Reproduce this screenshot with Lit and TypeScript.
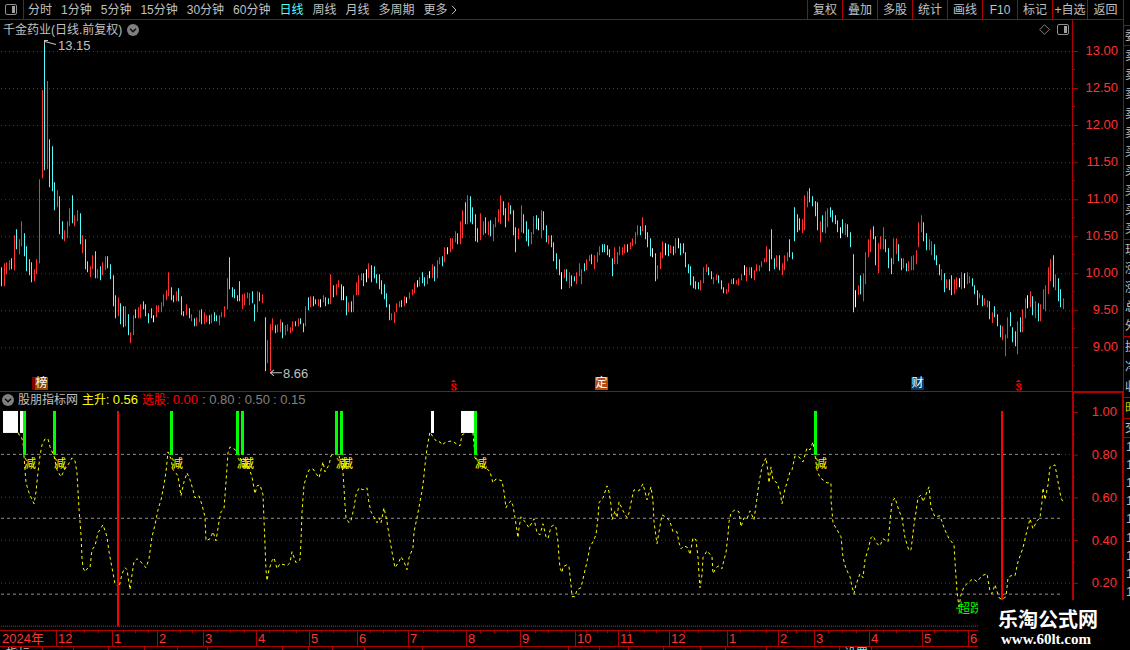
import { LitElement, html, svg, css } from "lit";
import { customElement } from "lit/decorators.js";
import { classMap } from "lit/directives/class-map.js";

const PLOT_W = 1072;
const PRICE_H = 371;
const PRICE_Y0 = 20;
const IND_H = 238;
const IND_Y0 = 392;

// Price bars: x, high, low, kind (r = rise, c = fall, w = unchanged)
const BARS = `
1 267 286 c,4 263 286 r,6 262 274 r,9 260 270 r,11 258 269 c,14 235 270 r,16 229 249 c,19 239 254 r,21 221 246 r,24 233 256 c,
26 246 271 c,29 259 275 c,31 262 282 c,34 269 281 r,36 259 274 r,39 179 263 r,42 90 178 r,44 40 170 c,47 81 169 r,49 139 187 c,
52 146 191 c,54 182 210 c,57 190 207 r,59 196 234 c,62 221 239 c,64 230 241 r,67 221 238 r,69 208 226 r,72 195 223 c,74 215 226 r,
77 210 221 r,80 213 244 c,82 235 253 r,85 239 269 c,87 261 272 c,90 266 277 r,92 255 269 r,95 251 278 c,97 269 278 r,100 266 280 c,
102 262 275 r,105 256 270 r,107 256 268 c,110 264 279 c,113 275 306 c,115 295 318 c,118 297 316 r,120 303 324 c,123 306 327 c,
125 306 326 r,128 314 335 c,130 332 343 r,133 315 335 r,135 309 318 c,138 307 318 r,140 304 318 r,143 301 309 c,145 304 316 c,
148 313 323 c,151 308 318 c,153 315 322 w,156 305 317 r,158 305 312 r,161 302 312 r,163 294 306 r,166 290 300 r,168 272 296 r,
171 287 300 c,173 295 302 c,176 291 301 r,178 288 301 c,181 296 315 c,183 311 316 c,186 304 315 r,189 308 318 c,191 314 321 r,
194 318 326 c,196 317 326 r,199 310 322 r,201 309 324 c,204 312 324 r,206 315 322 r,209 315 324 c,211 314 323 r,214 312 321 c,
216 315 321 c,219 315 325 r,221 312 317 r,224 306 317 r,227 278 309 r,229 257 289 c,232 287 297 c,234 289 298 c,237 295 301 c,
239 281 301 c,242 294 309 r,244 293 305 r,247 292 298 r,249 293 305 r,252 291 303 c,254 304 321 c,257 291 312 r,259 292 301 c,
262 294 303 r,265 317 371 c,267 340 363 r,270 324 371 r,272 318 330 r,275 325 333 c,277 324 332 r,280 319 332 r,282 322 338 c,
285 325 335 r,287 324 331 r,290 327 333 r,292 321 331 r,295 321 326 c,298 318 326 r,300 318 324 c,303 323 332 c,305 306 326 r,
308 297 310 c,310 296 307 r,313 296 306 c,315 299 304 c,318 299 306 r,320 299 307 w,323 295 302 r,325 297 306 c,328 298 304 c,
330 274 304 r,333 285 297 c,336 284 295 r,338 280 287 r,341 284 300 c,343 286 300 w,346 296 315 c,348 302 312 r,351 301 312 c,
353 295 312 r,356 282 295 r,358 275 295 r,361 273 280 r,363 273 286 c,366 269 282 w,368 263 278 r,371 265 282 c,374 266 278 c,
376 274 283 c,379 274 289 c,381 280 294 c,384 284 299 c,386 293 307 c,389 304 320 c,391 313 320 r,394 312 323 r,396 303 312 r,
399 301 307 r,401 300 307 c,404 296 306 r,406 297 303 w,409 292 299 r,412 289 295 r,414 283 293 r,417 280 287 w,419 277 286 r,
422 272 283 c,424 277 286 c,427 275 284 r,429 271 278 w,432 264 278 r,434 266 281 c,437 260 278 r,439 257 264 r,442 256 266 c,
444 247 262 r,447 247 254 w,450 238 252 r,452 238 249 r,455 231 242 r,457 233 244 c,460 221 244 r,462 210 238 r,465 202 224 c,
467 195 224 r,470 196 222 c,472 207 224 c,475 214 241 c,477 228 242 c,480 213 240 r,483 221 235 r,485 217 233 c,488 221 235 r,
490 220 236 c,493 224 241 r,495 217 227 r,498 209 222 r,500 195 224 r,503 201 215 c,505 208 227 c,508 202 221 r,510 205 214 c,
513 210 235 c,515 227 252 c,518 228 239 r,521 205 232 r,523 214 233 c,526 221 241 c,528 229 246 c,531 232 244 r,533 216 234 r,
536 215 229 c,538 218 230 w,541 210 238 r,543 211 230 c,546 225 242 c,548 235 244 r,551 235 247 c,553 242 261 c,556 253 269 c,
559 259 275 c,561 272 289 w,564 269 278 r,566 269 281 c,569 272 288 r,571 275 286 c,574 276 281 c,576 272 284 r,579 263 276 r,
581 269 284 r,584 263 271 c,586 259 270 r,589 255 261 r,591 254 264 c,594 255 269 r,597 252 262 r,599 246 255 r,602 244 252 c,
604 244 252 c,607 245 255 c,609 249 257 c,612 258 276 c,614 247 264 r,617 252 264 r,619 246 255 r,622 247 255 r,624 244 253 r,
627 244 252 c,630 242 249 r,632 238 246 r,635 232 244 r,637 225 235 r,640 226 235 c,642 217 231 r,645 225 239 c,647 232 247 c,
650 238 256 c,652 248 257 w,655 253 281 c,657 265 279 r,660 252 269 r,662 241 258 r,665 243 255 w,668 244 256 c,670 245 253 r,
673 246 255 c,675 238 253 r,678 238 248 w,680 243 255 c,683 243 253 c,685 252 267 c,688 264 273 c,690 266 285 c,693 276 288 c,
695 281 289 c,698 282 289 c,700 280 290 r,703 267 283 r,706 264 272 r,708 267 275 c,711 271 279 c,713 277 284 r,716 274 280 r,
718 275 283 c,721 280 289 c,723 287 293 c,726 289 294 r,728 283 292 r,731 279 284 r,733 278 284 c,736 280 284 r,738 278 285 r,
741 274 280 r,744 265 275 w,746 267 281 r,749 267 275 r,751 267 278 c,754 270 280 r,756 264 271 r,759 265 271 r,761 261 267 r,
764 258 262 r,766 246 262 r,769 249 271 c,771 229 259 c,774 258 269 c,776 255 267 r,779 255 270 c,782 263 275 r,784 255 270 r,
787 252 261 r,789 239 257 c,792 252 259 c,794 207 241 c,797 214 232 c,799 218 230 c,802 219 233 r,804 195 230 r,807 191 207 r,
809 188 202 c,812 196 206 c,815 201 216 c,817 202 230 c,820 221 242 r,822 215 232 c,825 211 233 r,827 208 227 r,830 207 217 c,
832 210 222 c,835 215 224 c,837 220 232 c,840 227 238 w,842 219 233 c,845 223 235 r,847 224 237 c,850 232 247 c,853 254 312 c,
855 290 307 w,858 285 295 r,860 275 294 c,863 273 301 r,865 252 284 r,868 239 257 r,870 229 252 r,873 226 239 c,875 236 265 c,
878 243 273 r,880 236 249 r,883 227 249 r,885 239 252 c,888 248 268 c,891 258 274 c,893 238 264 r,896 238 254 r,898 244 261 c,
901 258 270 c,903 258 268 r,906 263 271 c,908 261 271 r,911 256 270 r,913 255 270 r,916 250 264 r,918 222 247 r,921 215 232 r,
923 222 241 c,926 233 250 c,929 239 250 r,931 241 255 r,934 244 260 c,936 255 265 c,939 264 275 c,941 269 280 r,944 273 292 c,
946 279 288 r,949 279 290 c,951 275 295 c,954 279 294 r,956 277 289 r,959 278 287 w,961 272 289 r,964 273 288 w,967 272 284 r,
969 276 283 r,972 278 286 c,974 285 294 c,977 290 305 c,979 293 298 r,982 295 306 c,984 298 305 r,987 300 307 r,989 301 319 c,
992 312 323 r,994 306 317 c,997 314 326 c,1000 325 337 c,1002 326 340 r,1005 334 356 r,1007 317 338 r,1010 312 326 c,
1012 327 342 c,1015 331 346 c,1017 321 354 r,1020 317 332 c,1022 309 332 r,1025 298 318 r,1027 295 308 w,1030 291 307 r,
1032 296 315 c,1035 301 318 r,1038 303 321 c,1040 304 321 r,1043 289 309 r,1045 285 311 r,1048 267 294 r,1050 259 281 r,
1053 255 287 c,1055 274 290 r,1058 278 301 c,1060 289 307 c,1063 298 309 r`
  .split(",")
  .map((s) => s.trim().split(" "));

const barPath = (kind: string) =>
  BARS.filter((b) => b[3] === kind)
    .map((b) => `M${b[0]}.5 ${b[1]}V${b[2]}`)
    .join("");

// Indicator curve
const CURVE = `17,427 19,435 21,436 23,442 25,470 26,483 29,493 34,504 36,492 38,472 40,456 42,445 45,439 48,439 50,447 54,456
57,470 61,477 65,469 68,465 72,458 75,461 77,473 79,509 81,535 82,558 83,568 85,572 88,568 90,568 92,550 95,546 98,533 103,525
107,537 109,552 112,568 115,584 119,588 122,574 125,568 127,570 130,590 132,575 134,562 137,559 140,561 143,565 146,568 149,559
152,537 155,525 158,510 161,500 164,485 166,472 168,452 171,459 173,470 175,472 178,476 181,496 184,482 187,473 190,480 193,490
195,498 199,496 202,505 205,517 206,541 210,539 213,532 216,541 219,522 221,512 224,509 226,482 228,453 230,447 234,449 238,452
241,460 245,466 249,468 252,477 255,494 257,486 260,485 263,495 264,520 265,545 266,570 267,581 269,570 272,561 274,558 277,569
280,564 284,565 287,566 290,563 292,552 296,563 300,560 301,542 302,512 304,485 307,475 309,470 313,469 315,472 319,478 323,462
325,472 329,465 331,456 333,454 338,453 341,462 343,472 344,488 345,505 346,518 349,523 351,521 354,508 356,495 359,488 363,490
367,488 369,503 371,512 377,523 379,518 381,523 384,508 387,522 389,535 392,552 395,568 399,562 401,557 404,562 407,570 409,558
413,548 414,532 417,518 420,502 423,485 425,465 427,448 430,432 433,437 437,442 440,442 442,445 446,442 452,441 455,443 460,446
462,435 467,432 473,433 474,445 475,458 480,465 487,469 490,472 493,483 496,479 502,481 504,492 506,508 508,504 511,501 513,506
515,518 518,538 519,528 521,517 525,522 529,528 534,519 537,533 540,535 543,524 546,537 548,539 551,527 554,525 556,528 558,542
559,558 560,568 562,573 563,567 567,565 569,567 571,585 572,597 575,597 577,590 581,588 584,575 587,562 590,547 593,542 596,535
598,518 599,503 601,500 603,498 607,486 609,492 611,505 612,520 615,511 617,518 619,502 623,511 627,518 629,513 632,498 634,490
639,491 643,484 647,500 651,487 653,502 654,522 656,537 657,544 659,532 662,515 667,518 670,522 673,532 677,532 679,543 681,549
684,546 688,548 690,555 693,538 696,540 698,558 699,575 700,588 702,575 703,558 707,551 712,557 713,574 716,568 719,566 722,569
724,560 726,553 728,535 729,522 731,513 735,510 739,512 741,527 744,518 747,519 750,511 754,520 757,498 759,483 762,467 766,458
768,472 769,483 771,467 773,480 777,483 780,492 782,504 785,489 787,483 790,472 792,470 795,456 799,457 803,462 805,455 807,448
810,450 813,442 815,455 817,470 820,478 823,480 827,483 831,483 831,500 833,523 837,530 841,537 843,558 846,569 850,577 852,587
854,594 856,585 860,574 863,578 865,560 868,550 871,538 873,536 877,544 880,546 883,539 888,542 890,522 892,502 895,498 899,511
902,518 905,538 909,551 911,550 914,525 916,512 918,498 921,495 923,502 929,487 931,508 935,517 940,516 944,528 949,539 954,545
955,562 957,592 959,607 961,595 964,587 967,584 973,579 977,582 982,576 987,574 990,592 992,594 995,585 999,598 1002,600
1006,597 1008,578 1011,576 1015,576 1018,562 1023,548 1026,535 1030,519 1033,529 1037,521 1040,518 1042,502 1043,488 1045,500
1048,485 1050,467 1055,465 1058,482 1061,498 1063,502`;

const PRICE_TICKS = ["13.00", "12.50", "12.00", "11.50", "11.00", "10.50", "10.00", "9.50", "9.00"].map(
  (label, i) => ({ label, y: 51 + i * 37 })
);
const IND_TICKS = ["1.00", "0.80", "0.60", "0.40", "0.20"].map((label, i) => ({ label, y: 411 + i * 43 }));

const GREEN = [23, 53, 170, 236, 241, 335, 340, 474, 814];
const WHITE = [
  [3, 15],
  [20, 3],
  [431, 3],
  [461, 13],
];
const REDUCE = [24, 54, 171, 237, 242, 336, 341, 475, 815];
const DIVIDEND = [451, 1016];

const MONTHS: [number, string][] = [
  [0, "2024年"], [56, "12"], [112, "1"], [157, "2"], [203, "3"], [256, "4"], [309, "5"], [357, "6"], [408, "7"],
  [466, "8"], [520, "9"], [575, "10"], [618, "11"], [669, "12"], [727, "1"], [778, "2"], [814, "3"], [869, "4"],
  [922, "5"], [968, "6"],
];
const WEEKS = [
  70, 84, 98, 123, 135, 148, 180, 192, 217, 230, 244, 269, 283, 296, 321, 333, 345, 370, 383, 395, 423, 437, 453, 480,
  494, 507, 535, 548, 561, 586, 597, 607, 629, 644, 656, 684, 698, 713, 740, 753, 766, 787, 796, 805, 828, 842, 856,
  883, 896, 909, 934, 945, 957,
];
const FOOT = [42, 73, 108, 144, 177, 207, 282, 308, 332, 364, 422, 568, 599, 628, 663, 700, 725, 766, 839, 871];

const PERIODS = ["分时", "1分钟", "5分钟", "15分钟", "30分钟", "60分钟", "日线", "周线", "月线", "多周期"];
const TOOLS = ["复权", "叠加", "多股", "统计", "画线", "F10", "标记", "+自选", "返回"];

const pctX = (x: number) => `${(x / PLOT_W) * 100}%`;
const priceY = (y: number) => `${((y - PRICE_Y0) / PRICE_H) * 100}%`;
const indY = (y: number) => `${((y - IND_Y0) / IND_H) * 100}%`;

const chevron = html`<svg class="chev" viewBox="0 0 12 12" width="12" height="12" aria-hidden="true">
  <circle cx="6" cy="6" r="6" fill="#808080" />
  <path d="M3 4.7 6 7.7 9 4.7" fill="none" stroke="#101010" stroke-width="1.6" />
</svg>`;

const panelIcon = html`<svg viewBox="0 0 12 11" width="12" height="11" aria-hidden="true">
  <rect x=".5" y=".5" width="11" height="10" rx="1.5" fill="none" stroke="#909090" />
  <rect x="7" y="2" width="3" height="7" fill="#a0a0a0" />
</svg>`;

@customElement("app-root")
export class AppRoot extends LitElement {
  static styles = css`
    :host {
      display: block;
      height: 100vh;
      --line: #b00000;
      --cjk: "Liberation Sans", "Noto Sans CJK SC", sans-serif;
      background: #000;
      color: #c0c0c0;
      font: 12px/14px var(--cjk);
    }
    * { box-sizing: border-box; }
    .app {
      position: relative;
      display: grid;
      grid-template-columns: minmax(0, 1fr) 7px;
      height: 100%;
      overflow: hidden;
    }
    .left { display: flex; flex-direction: column; min-width: 0; min-height: 0; }
    button {
      appearance: none;
      margin: 0;
      padding: 0;
      border: 0;
      background: none;
      color: inherit;
      font: inherit;
      white-space: nowrap;
      display: flex;
      align-items: center;
      justify-content: center;
    }
    .toolbar {
      flex: none;
      display: flex;
      height: 20px;
      border-bottom: 1px solid var(--line);
    }
    .toggle { width: 24px; padding-right: 1px; border-right: 1px solid var(--line); }
    .periods { display: flex; flex: 1; gap: 9px; padding-left: 4px; overflow: hidden; }
    .periods .on { color: #54fcfc; }
    .more { gap: 3px; }
    .tools { display: flex; }
    .tools button { width: 35px; border-left: 1px solid var(--line); }
    .tools button:last-child { width: 36px; }
    .row {
      display: grid;
      grid-template-columns: minmax(0, 1fr) 51px;
      min-height: 0;
    }
    .price { flex: 372 1 0; border-bottom: 1px solid var(--line); }
    .ind { flex: 238 1 0; }
    .plot { position: relative; overflow: hidden; min-height: 0; }
    .canvas { position: absolute; inset: 0; width: 100%; height: 100%; display: block; }
    .head {
      position: absolute;
      top: 0;
      left: 0;
      right: 0;
      display: flex;
      align-items: center;
      gap: 5px;
      height: 19px;
      padding: 0 3px;
      white-space: nowrap;
    }
    .head .icons { display: flex; align-items: center; gap: 7px; margin-left: auto; }
    .chev { flex: none; }
    .ind .head { height: 16px; padding: 0 2px; gap: 4px; }
    .num { font-size: 13px; }
    .levels { display: flex; gap: 3px; color: #808080; }
    .yellow { color: #ff0; }
    .red { color: #f00; }
    .mark { position: absolute; white-space: nowrap; }
    .callout { font-size: 13px; }
    .reduce { color: #ff0; }
    .over { color: #0f0; }
    .badge {
      height: 13px;
      width: 13px;
      color: #fff;
      line-height: 13px;
      text-align: center;
    }
    .rank { width: 16px; padding-left: 3px; background: linear-gradient(90deg, #800000 3px, #8a4600 3px); }
    .fixed { background: #b84a10; }
    .fin { background: #003c70; }
    .axis { position: relative; border-left: 1px solid var(--line); }
    .ind .axis {
      margin-top: -1px;
      border: 2px solid var(--line);
      border-bottom: 0;
      border-right-width: 1px;
    }
    .tick {
      position: absolute;
      left: 0;
      right: 5px;
      height: 14px;
      margin-top: -7px;
      color: #ff3232;
      font-size: 13px;
      text-align: right;
    }
    .time { flex: none; position: relative; height: 17px; border: 1px solid var(--line); border-width: 1px 0; overflow: hidden; }
    .wide { position: relative; width: calc(100% - 51px); height: 100%; }
    .month {
      position: absolute;
      top: 0;
      height: 15px;
      padding-left: 1px;
      border-left: 1px solid var(--line);
      color: #ff3232;
      font-size: 13px;
      line-height: 15px;
      white-space: nowrap;
    }
    .month:first-child { border-left-color: transparent; }
    .week { position: absolute; top: 0; width: 1px; height: 2px; background: var(--line); }
    .foot { flex: none; height: 3px; overflow: hidden; }
    .cell { position: absolute; top: 0; width: 1px; height: 3px; background: var(--line); }
    .sliver { position: absolute; top: 0; line-height: 14px; color: #c0c0c0; }
    .cyan { color: #54fcfc; }
    .side { border-left: 1px solid var(--line); overflow: hidden; display: flex; flex-direction: column; padding-top: 25px; }
    .group {
      flex: none;
      border-top: 1px solid var(--line);
      display: flex;
      flex-direction: column;
      justify-content: space-around;
      padding-left: 1px;
      width: 20px;
      line-height: 14px;
    }
    .g1 { height: 20px; }
    .g2 { height: 194px; }
    .g3 { height: 97px; }
    .g4 { height: 61px; }
    .g5 { height: 21px; color: #c8c800; }
    .g6 { height: 19px; }
    .g7 { height: 164px; padding-left: 2px; font-size: 13px; }
    .brand {
      position: absolute;
      right: 0;
      bottom: 0;
      width: 152px;
      height: 50px;
      background: #000;
      color: #fff;
      padding: 8px 0 0 20px;
      font: bold 20px/22px "Noto Sans CJK SC", sans-serif;
      white-space: nowrap;
    }
    .brand a {
      display: block;
      padding-left: 3px;
      color: inherit;
      text-decoration: none;
      font: bold 15px/18px "Liberation Serif", serif;
    }
  `;

  private grid(ys: number[]) {
    return svg`<path d=${ys.map((y) => `M1 ${y}.5H1072`).join("")} stroke="#b01010" stroke-dasharray="1 3"/>`;
  }

  private pricePlot() {
    return html`<div class="plot">
      <svg class="canvas" viewBox="0 20 1072 371" preserveAspectRatio="none" fill="none" role="img" aria-label="日线">
        ${this.grid(PRICE_TICKS.map((t) => t.y))}
        <path d=${barPath("r")} stroke="#ff3232" />
        <path d=${barPath("c")} stroke="#54fcfc" />
        <path d=${barPath("w")} stroke="#fff" />
        <path d="M44.5 46V40.5H48M45 41.5 56 44.5" stroke="#c0c0c0" />
        <path d="M270 372.5H282M274 369.5 270.5 372.5 274 375.5" stroke="#c0c0c0" />
        ${DIVIDEND.map(
          (x) => svg`<g transform="translate(${x} 379)" fill="#f00">
            <path d="M0 2.500 2.500 0 5 2.500Z" />
            <path d="M1 4H5V5H6V6H4V5H2V6H4V7H5V8H6V10H5V11H1V10H0V9H2V10H4V8H2V7H1V6H0V5H1Z" />
          </g>`
        )}
      </svg>
      <span class="mark callout" style="left:${pctX(58)};top:${priceY(39)}">13.15</span>
      <span class="mark callout" style="left:${pctX(283)};top:${priceY(367)}">8.66</span>
      <span class="mark badge rank" style="left:${pctX(32)};top:${priceY(377)}">榜</span>
      <span class="mark badge fixed" style="left:${pctX(595)};top:${priceY(377)}">定</span>
      <span class="mark badge fin" style="left:${pctX(911)};top:${priceY(377)}">财</span>
      <div class="head">
        <span>千金药业(日线.前复权)</span>${chevron}
        <span class="icons">
          <svg viewBox="0 0 11 11" width="11" height="11" aria-hidden="true">
            <path d="M5.5 .7 10.3 5.5 5.5 10.3 .7 5.5Z" fill="none" stroke="#808080" />
          </svg>
          ${panelIcon}
        </span>
      </div>
    </div>`;
  }

  private indicatorPlot() {
    return html`<div class="plot">
      <svg class="canvas" viewBox="0 392 1072 238" preserveAspectRatio="none" fill="none" role="img" aria-label="主升">
        ${this.grid([454, 497, 540, 583])}
        <path d="M1 626.5H1072" stroke="#ff1010" stroke-dasharray="1 1" />
        <path d="M0 454.5H1061" stroke="#000" />
        <path d="M1 454.5H1061M1 518.5H1061M1 594.5H1061" stroke="#909090" stroke-dasharray="3 3" />
        <polyline points=${CURVE} stroke="#ff0" stroke-dasharray="3 3" shape-rendering="crispEdges" />
        ${WHITE.map(([x, w]) => svg`<rect x=${x} y="411" width=${w} height="22" fill="#fff"/>`)}
        ${GREEN.map((x) => svg`<rect x=${x} y="411" width="3" height="44" fill="#0f0"/>`)}
        <path d="M118 411V627M1002 411V627" stroke="#f00" stroke-width="2" />
        <path d="M956 608.5H960" stroke="#0f0" />
      </svg>
      ${REDUCE.map((x) => html`<span class="mark reduce" style="left:${pctX(x)};top:${indY(457)}">减</span>`)}
      <span class="mark over" style="left:${pctX(958)};top:${indY(602)}">超跌</span>
      <div class="head">
        ${chevron}<span>股朋指标网</span>
        <span class="yellow">主升: <span class="num">0.56</span></span>
        <span class="red">选股: <span class="num">0.00</span></span>
        <span class="levels num"><span>: 0.80</span><span>: 0.50</span><span>: 0.15</span></span>
      </div>
    </div>`;
  }

  render() {
    const priceMarks = PRICE_TICKS.map((t) => `M0 ${t.y}.5H5M0 ${t.y + 18}.5H2`).join("");
    const indMarks = IND_TICKS.map((t) => `M0 ${t.y}.5H4M0 ${t.y + 22}.5H1`).join("");
    return html`<div class="app">
      <main class="left">
        <nav class="toolbar">
          <button class="toggle" aria-label="面板">${panelIcon}</button>
          <div class="periods">
            ${PERIODS.map((p) => html`<button class=${classMap({ on: p === "日线" })}>${p}</button>`)}
            <button class="more">
              更多
              <svg viewBox="0 0 6 10" width="6" height="10" aria-hidden="true">
                <path d="M1 .8 5 5 1 9.2" fill="none" stroke="#c0c0c0" />
              </svg>
            </button>
          </div>
          <div class="tools">${TOOLS.map((t) => html`<button>${t}</button>`)}</div>
        </nav>
        <section class="row price">
          ${this.pricePlot()}
          <div class="axis">
            <svg class="canvas" viewBox="0 20 50 371" preserveAspectRatio="none"><path d=${priceMarks} stroke="#b00000" /></svg>
            ${PRICE_TICKS.map((t) => html`<span class="tick" style="top:${priceY(t.y)}">${t.label}</span>`)}
          </div>
        </section>
        <section class="row ind">
          ${this.indicatorPlot()}
          <div class="axis">
            <svg class="canvas" viewBox="0 392 48 238" preserveAspectRatio="none"><path d=${indMarks} stroke="#b00000" /></svg>
            ${IND_TICKS.map((t) => html`<span class="tick" style="top:${indY(t.y)}">${t.label}</span>`)}
          </div>
        </section>
        <div class="time">
          <div class="wide">
            ${MONTHS.map(([x, l]) => html`<span class="month" style="left:${pctX(x)}">${l}</span>`)}
            ${WEEKS.map((x) => html`<i class="week" style="left:${pctX(x)}"></i>`)}
          </div>
        </div>
        <div class="foot">
          <div class="wide">
            ${FOOT.map((x) => html`<i class="cell" style="left:${pctX(x)}"></i>`)}
            <span class="sliver" style="left:${pctX(6)}">指标</span>
            <span class="sliver cyan" style="left:${pctX(844)}">设置</span>
          </div>
        </div>
      </main>
      <aside class="side">
        <div class="group g1"><span>委</span></div>
        <div class="group g2">${"卖卖卖卖卖买买买买买".split("").map((c) => html`<span>${c}</span>`)}</div>
        <div class="group g3">${"现涨涨总外".split("").map((c) => html`<span>${c}</span>`)}</div>
        <div class="group g4">${"换净收".split("").map((c) => html`<span>${c}</span>`)}</div>
        <div class="group g5"><span>时</span></div>
        <div class="group g6"><span>交</span></div>
        <div class="group g7">${Array.from({ length: 9 }, () => html`<span>1</span>`)}</div>
      </aside>
      <div class="brand">乐淘公式网<a href="#">www.60lt.com</a></div>
    </div>`;
  }
}
